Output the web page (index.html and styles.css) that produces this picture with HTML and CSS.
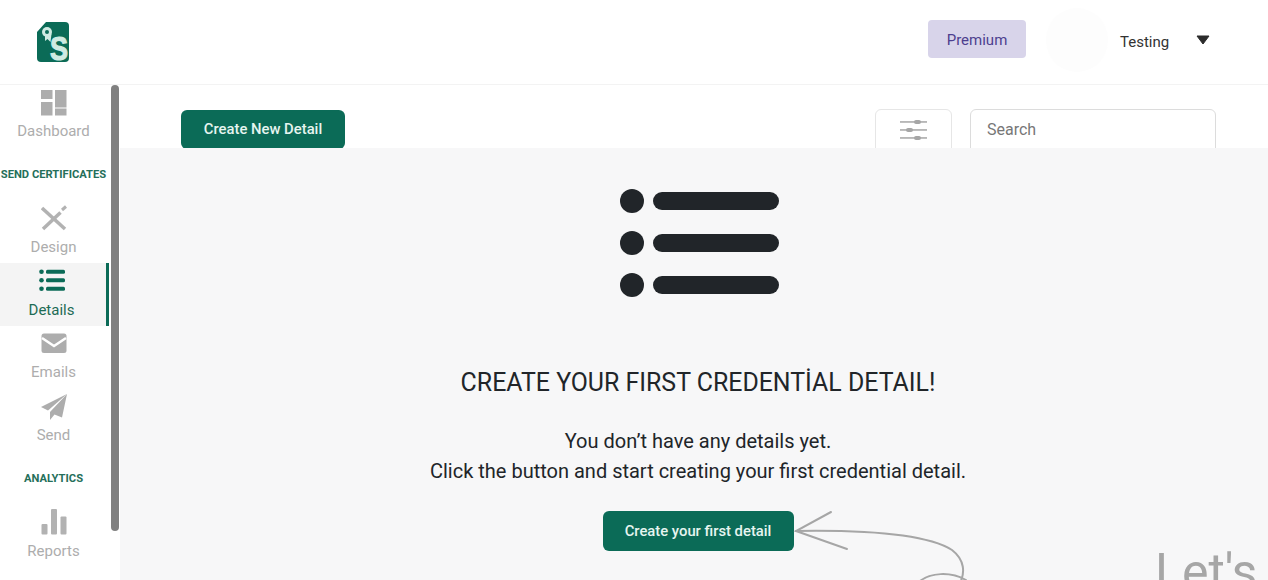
FILE: index.html
```html
<!DOCTYPE html>
<html lang="en">
<head>
<meta charset="UTF-8">
<title>Details</title>
<link rel="stylesheet" href="styles.css">
</head>
<body>
<!-- Top bar -->
<header class="topbar">
  <a class="logo" href="#">
    <svg class="logo-mark" width="32" height="40" viewBox="0 0 32 40">
      <path d="M9 0H28Q32 0 32 4V36Q32 40 28 40H4Q0 40 0 36V10Z" fill="#0b6b57"/>
      <path d="M8 11L8 19L10.500 17L13.500 20L14.500 12Z" fill="#cfeae2"/>
      <circle cx="10" cy="10" r="5" fill="#cfeae2"/>
      <circle cx="10" cy="10" r="2" fill="#0b6b57"/>
      <text class="logo-letter" x="13" y="38" textLength="18" lengthAdjust="spacingAndGlyphs">S</text>
    </svg>
  </a>
  <div class="topbar-right">
    <button class="premium">Premium</button>
    <div class="avatar"></div>
    <span class="username">Testing</span>
    <svg class="caret" width="14" height="10" viewBox="0 0 14 10"><path d="M1 1H13L7 9Z" fill="#2b2b2b" stroke="#2b2b2b" stroke-linejoin="round"/></svg>
  </div>
</header>

<div class="layout">
  <!-- Sidebar -->
  <aside class="sidebar">
    <a class="nav-item tight" href="#">
      <svg class="nav-icon" width="26" height="26" viewBox="0 0 26 26" fill="#adadad">
        <rect x="0" y="0" width="11.500" height="9"/>
        <rect x="0" y="12" width="11.500" height="13.500"/>
        <rect x="14" y="0" width="11.500" height="17.500"/>
        <rect x="14" y="18.500" width="11.500" height="7"/>
      </svg>
      <span>Dashboard</span>
    </a>
    <div class="nav-heading">SEND CERTIFICATES</div>
    <a class="nav-item" href="#">
      <svg class="nav-icon" width="26" height="26" viewBox="0 0 26 26" fill="none" stroke="#b2b2b2">
        <path d="M1 3L24 24" stroke-width="3.500"/>
        <path d="M2 24L19.500 7.500" stroke-width="3.500"/>
        <path d="M21 5L25 1.500" stroke-width="3"/>
      </svg>
      <span>Design</span>
    </a>
    <a class="nav-item active" href="#">
      <svg class="nav-icon" width="26" height="26" viewBox="0 0 26 26" fill="#0b6b57">
        <circle cx="2.500" cy="3.700" r="2.300"/>
        <rect x="7" y="1.700" width="19" height="4" rx="1.500"/>
        <circle cx="2.500" cy="12.300" r="2.300"/>
        <rect x="7" y="10.300" width="19" height="4" rx="1.500"/>
        <circle cx="2.500" cy="20.700" r="2.300"/>
        <rect x="7" y="18.700" width="19" height="4" rx="1.500"/>
      </svg>
      <span>Details</span>
    </a>
    <a class="nav-item tight" href="#">
      <svg class="nav-icon" width="26" height="26" viewBox="0 0 26 26">
        <rect x="0.500" y="2.500" width="25" height="19.500" rx="2.500" fill="#adadad"/>
        <path d="M1 7L13 15L25 7" fill="none" stroke="#fff" stroke-width="2.500"/>
      </svg>
      <span>Emails</span>
    </a>
    <a class="nav-item tight" href="#">
      <svg class="nav-icon" width="26" height="26" viewBox="0 0 26 26" fill="#adadad">
        <path d="M26 0L0 13L7 16.500Z"/>
        <path d="M26 0L9 18L9 26L13.500 20.500L21 23.500Z"/>
      </svg>
      <span>Send</span>
    </a>
    <div class="nav-heading">ANALYTICS</div>
    <a class="nav-item" href="#">
      <svg class="nav-icon" width="26" height="26" viewBox="0 0 26 26" fill="#b2b2b2">
        <rect x="0.500" y="15" width="6" height="10.500" rx="1"/>
        <rect x="10" y="0" width="6" height="25.500" rx="1"/>
        <rect x="19.500" y="7.500" width="6" height="18" rx="1"/>
      </svg>
      <span>Reports</span>
    </a>
    <div class="scroll-thumb"></div>
  </aside>

  <main class="content">
    <div class="toolbar">
      <button class="btn-green btn-new">Create New Detail</button>
      <div class="toolbar-right">
        <button class="filter-btn">
          <svg width="27" height="20" viewBox="0 0 27 20" fill="#a6a6a6">
            <rect x="0" y="1.200" width="27" height="1.500"/>
            <rect x="14" y="0" width="7" height="4" rx="2"/>
            <rect x="0" y="9.200" width="27" height="1.500"/>
            <rect x="6" y="8" width="7" height="4" rx="2"/>
            <rect x="0" y="17.200" width="27" height="1.500"/>
            <rect x="14" y="16" width="7" height="4" rx="2"/>
          </svg>
        </button>
        <input class="search" type="text" placeholder="Search">
      </div>
    </div>

    <!-- Empty state -->
    <section class="empty">
      <div class="empty-icon">
        <div class="empty-row"><i></i><b></b></div>
        <div class="empty-row"><i></i><b></b></div>
        <div class="empty-row"><i></i><b></b></div>
      </div>
      <h2>CREATE YOUR FIRST CREDENTİAL DETAIL!</h2>
      <p>You don’t have any details yet.<br>Click the button and start creating your first credential detail.</p>
      <button class="btn-green btn-first">Create your first detail</button>
      <svg class="arrow" width="190" height="77" viewBox="0 0 190 77" fill="none" stroke="#a6a6a6" stroke-width="2" stroke-linecap="round">
        <path d="M41 9L6 28L57 46"/>
        <path d="M6 28C70 27 135 30 162 47C175 57 175 70 170 80"/>
        <path d="M130 78C140 70 160 68 176 77"/>
      </svg>
      <div class="lets">Let's</div>
    </section>
  </main>
</div>
</body>
</html>
```

FILE: styles.css
```css
* {
  box-sizing: border-box;
}
html, body {
  height: 100%;
}
body {
  margin: 0;
  overflow: hidden;
  background: #fff;
  color: #212529;
  font-family: Roboto, 'Liberation Sans', sans-serif;
}
a {
  text-decoration: none;
}
button {
  font-family: inherit;
  cursor: pointer;
}

/* top bar */
.topbar {
  height: 85px;
  display: flex;
  justify-content: space-between;
  align-items: flex-start;
  padding: 0 58px 0 37px;
  border-bottom: 1px solid #f3f3f3;
}
.logo {
  margin-top: 22px;
  display: block;
  height: 40px;
}
.logo-mark {
  overflow: visible;
}
.logo-letter {
  font-family: 'Liberation Sans', sans-serif;
  font-weight: 700;
  font-size: 34px;
  fill: #cfeae2;
  stroke: #cfeae2;
  stroke-width: 1.2px;
}
.topbar-right {
  display: flex;
  align-items: flex-start;
}
.premium {
  width: 98px;
  height: 38px;
  margin-top: 20px;
  padding: 2px 0 0;
  border: none;
  border-radius: 4px;
  background: #d8d4ea;
  color: #4d3f8f;
  font-size: 15px;
}
.avatar {
  width: 62px;
  height: 64px;
  margin: 8px 12px 0 20px;
  border-radius: 50%;
  background: #fdfdfd;
}
.username {
  margin-top: 33px;
  width: 76px;
  font-size: 15px;
  line-height: 18px;
  color: #333;
}
.caret {
  margin-top: 35px;
}

.layout {
  display: flex;
  height: 495px;
}

/* sidebar */
.sidebar {
  position: relative;
  width: 120px;
  flex: none;
  overflow: hidden;
}
.nav-item {
  display: block;
  width: 107px;
  height: 63px;
  padding-top: 5px;
  text-align: center;
  font-size: 15px;
  color: #adadad;
}
.nav-icon {
  display: block;
  margin: 0 auto;
}
.nav-item span {
  display: block;
  line-height: 18px;
  margin-top: 7px;
}
.nav-item.tight span {
  margin-top: 6px;
}
.nav-item.active {
  width: 109px;
  padding-right: 3px;
  background: #f4f4f4;
  border-right: 3px solid #0b6b57;
  color: #1d6b55;
}
.nav-heading {
  width: 107px;
  height: 52px;
  padding-top: 1px;
  line-height: 52px;
  text-align: center;
  font-size: 11.2px;
  font-weight: 700;
  white-space: nowrap;
  color: #256f5a;
}
.scroll-thumb {
  position: absolute;
  top: 0;
  left: 111px;
  width: 8px;
  height: 446px;
  border-radius: 4px;
  background: #808080;
}

/* main area */
.content {
  flex: 1;
  min-width: 0;
  display: flex;
  flex-direction: column;
}
.toolbar {
  height: 63px;
  flex: none;
  overflow: hidden;
  display: flex;
  justify-content: space-between;
  align-items: flex-start;
  padding: 24px 52px 0 61px;
}
.btn-green {
  border: none;
  border-radius: 6px;
  background: #0b6b57;
  color: #e6f5f0;
  font-size: 14.8px;
  font-weight: 500;
}
.btn-new {
  width: 164px;
  height: 39px;
  margin-top: 1px;
  padding: 0 0 1px;
}
.toolbar-right {
  display: flex;
  gap: 18px;
}
.filter-btn {
  width: 77px;
  height: 50px;
  padding: 10px 0 0;
  background: #fff;
  border: 1px solid #e6e6e6;
  border-radius: 6px;
  display: flex;
  align-items: flex-start;
  justify-content: center;
}
.search {
  width: 246px;
  height: 50px;
  padding: 0 16px 10px;
  border: 1px solid #dcdcdc;
  border-radius: 6px;
  font-family: inherit;
  font-size: 16px;
  outline: none;
}
.search::placeholder {
  color: #777;
}

/* empty state */
.empty {
  position: relative;
  flex: 1;
  overflow: hidden;
  background: #f7f7f8;
  padding: 41px 0 0 8px;
  display: flex;
  flex-direction: column;
  align-items: center;
}
.empty-icon {
  width: 159px;
  margin-left: 2px;
  display: flex;
  flex-direction: column;
  gap: 18px;
}
.empty-row {
  display: flex;
  align-items: center;
  gap: 9px;
}
.empty-row i {
  width: 24px;
  height: 24px;
  border-radius: 50%;
  background: #212529;
}
.empty-row b {
  width: 126px;
  height: 18px;
  border-radius: 9px;
  background: #212529;
}
.empty h2 {
  margin: 71px 0 0;
  font-size: 24.9px;
  line-height: 30px;
  font-weight: 400;
}
.empty p {
  margin: 28px 0 0;
  font-size: 20px;
  line-height: 30px;
  text-align: center;
}
.btn-first {
  width: 191px;
  height: 40px;
  margin-top: 25px;
  flex: none;
}
.arrow {
  position: absolute;
  left: 670px;
  top: 355px;
}
.lets {
  position: absolute;
  left: 1035px;
  top: 397px;
  font-size: 50px;
  line-height: 54px;
  color: #a6a6a6;
}
```
